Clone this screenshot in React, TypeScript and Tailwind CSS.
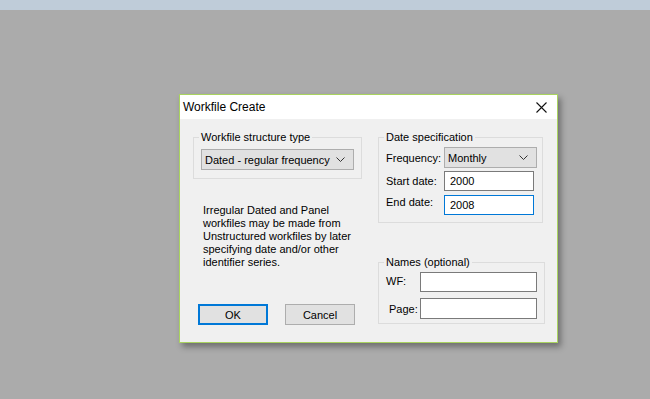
const font = { fontFamily: '"Liberation Sans", Arial, sans-serif' };

function Chevron() {
  return (
    <svg width="9" height="5" viewBox="0 0 9 5" className="shrink-0">
      <polyline points="0.5,0.5 4.5,4.5 8.5,0.5" fill="none" stroke="#333" strokeWidth="1" />
    </svg>
  );
}

function Dropdown({ value, className }: { value: string; className: string }) {
  return (
    <div
      className={`flex items-center justify-between whitespace-nowrap border border-[#adadad] bg-[#e1e1e1] pl-[3px] pr-[8px] ${className}`}
    >
      <span>{value}</span>
      <Chevron />
    </div>
  );
}

function TextBox({ value, focused, className }: { value?: string; focused?: boolean; className: string }) {
  return (
    <div
      className={`flex items-center bg-white pl-[5px] border ${focused ? 'border-[#0078d7]' : 'border-[#7a7a7a]'} ${className}`}
    >
      {value}
    </div>
  );
}

export default function App() {
  return (
    <div
      className="h-[399px] w-[650px] overflow-hidden whitespace-nowrap bg-[#ababab] text-[11px] leading-[16px] text-black"
      style={font}
    >
      <div className="h-[10px] bg-[#bfccd9]" />

      <div className="ml-[179px] mt-[84px] w-[379px] h-[249px] border border-[#a9d35f] bg-[#f0f0f0] shadow-[3px_4px_6px_rgba(0,0,0,0.35)] flex flex-col">
        {/* title bar */}
        <div className="h-[24px] bg-white flex items-center justify-between pl-[3px] pr-[10px]">
          <span className="text-[12px]">Workfile Create</span>
          <svg width="11" height="11" viewBox="0 0 11 11">
            <path d="M0.5 0.5 L10.5 10.5 M10.5 0.5 L0.5 10.5" stroke="#111" strokeWidth="1.1" />
          </svg>
        </div>

        <div className="flex flex-1 pt-[10px] pl-[13px]">
          {/* left column */}
          <div className="w-[169px] flex flex-col">
            <fieldset className="border border-[#dcdcdc] px-[7px] pb-[8px] pt-[4px]">
              <legend className="-ml-[2px] px-[2px]">Workfile structure type</legend>
              <Dropdown value="Dated - regular frequency" className="h-[21px] w-[153px]" />
            </fieldset>

            <p className="mt-[25px] ml-[10px] leading-[13px]">
              Irregular Dated and Panel
              <br />
              workfiles may be made from
              <br />
              Unstructured workfiles by later
              <br />
              specifying date and/or other
              <br />
              identifier series.
            </p>

            <div className="mt-[35px] ml-[5px] flex gap-[17px]">
              <button className="w-[70px] h-[21px] bg-[#e1e1e1] border-2 border-[#0078d7] flex items-center justify-center">
                OK
              </button>
              <button className="w-[70px] h-[21px] bg-[#e1e1e1] border border-[#adadad] flex items-center justify-center">
                Cancel
              </button>
            </div>
          </div>

          {/* right column */}
          <div className="ml-[16px] flex flex-col">
            <fieldset className="w-[165px] border border-[#dcdcdc] px-[7px] pt-[2px] pb-[7px]">
              <legend className="-ml-[2px] px-[2px]">Date specification</legend>
              <div className="flex items-center justify-between h-[21px]">
                <span>Frequency:</span>
                <Dropdown value="Monthly" className="h-[21px] w-[93px] -mr-[2px]" />
              </div>
              <div className="mt-[3px] flex items-center h-[20px]">
                <span className="w-[58px]">Start date:</span>
                <TextBox value="2000" className="h-[20px] w-[90px]" />
              </div>
              <div className="mt-[4px] flex items-start h-[20px]">
                <span className="w-[58px] -mt-[1px]">End date:</span>
                <TextBox value="2008" focused className="h-[20px] w-[90px]" />
              </div>
            </fieldset>

            <fieldset className="mt-[31px] w-[167px] border border-[#dcdcdc] px-[7px] pt-[2px] pb-[4px]">
              <legend className="-ml-[2px] px-[2px]">Names (optional)</legend>
              <div className="flex items-center h-[20px]">
                <span className="w-[34px] -mt-[3px]">WF:</span>
                <TextBox className="h-[20px] w-[117px]" />
              </div>
              <div className="mt-[6px] flex items-center h-[21px]">
                <span className="w-[34px] pl-[3px]">Page:</span>
                <TextBox className="h-[21px] w-[117px]" />
              </div>
            </fieldset>
          </div>
        </div>
      </div>
    </div>
  );
}
